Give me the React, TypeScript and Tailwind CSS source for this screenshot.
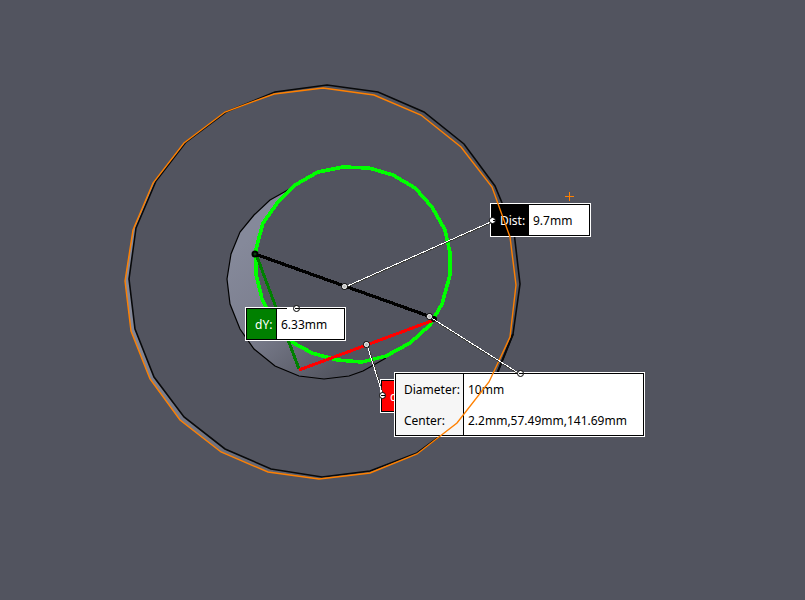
import React from "react";

type LabelRow = { name: string; value: string };

const outerBlack =
  "327,85 378,92 424,112 464,144 495,186 514,232 520,284 513,334 494,381 459,422 417,453 370,471 322,477 271,469 225,449 184,417 154,377 135,329 129,279 136,228 156,181 186,142 226,112 275,92";
const outerOrange =
  "323,88 374,95 421,115 461,147 492,187 510,237 516,285 510,337 489,382 457,423 417,454 370,473 319,479 268,472 221,452 180,420 150,379 131,331 125,281 133,230 153,183 184,143 225,112 274,94";
const greenCircle =
  "343,167 369,168 393,175 415,188 432,207 445,230 450,253 450,275 442,304 430,325 410,343 386,356 362,362 337,360 312,353 290,341 274,322 262,299 256,274 256,249 263,223 278,202 295,185 318,172";
const crescent =
  "291,188 270,200 254,215 240,232 231,254 227,279 230,304 240,329 254,349 275,366 299,376 324,379 349,376 363,371 386,356 362,362 337,360 312,353 290,341 274,322 262,299 256,274 256,249 263,223 278,202";
const crescentEdge =
  "295,186 270,200 254,215 240,232 231,254 227,279 230,304 240,329 254,349 275,366 299,376 324,379 349,376 363,371 386,358";

const lineHandles = [
  [345, 287],
  [430, 317],
  [367, 345],
];
const labelHandles = [
  [297, 309],
  [521, 374],
  [383, 396],
  [493, 221],
];

function Model() {
  return (
    <svg className="absolute left-0 top-0" width="805" height="600" viewBox="0 0 805 600" fill="none" aria-hidden="true">
      <defs>
        <linearGradient id="face" gradientUnits="userSpaceOnUse" x1="235" y1="250" x2="340" y2="370">
          <stop offset="0" stopColor="#85899a" />
          <stop offset="0.45" stopColor="#7c7f8f" />
          <stop offset="1" stopColor="#535560" />
        </linearGradient>
        <linearGradient id="rim" gradientUnits="userSpaceOnUse" x1="125" y1="300" x2="330" y2="330">
          <stop offset="0" stopColor="#85899a" />
          <stop offset="1" stopColor="#5b5d68" />
        </linearGradient>
      </defs>
      <path
        d="M184,143 153,183 133,230 125,281 131,331 150,379 180,420 221,452 268,472 319,479 322,477 271,469 225,449 184,417 154,377 135,329 129,279 136,228 156,181 186,142Z"
        fill="url(#rim)"
      />
      <polygon points={crescent} fill="url(#face)" />
      <polyline points={crescentEdge} stroke="#000" strokeWidth="1.2" />
      <polygon points={outerBlack} stroke="#08090a" strokeWidth="1.6" />
      <path d="M513,334 494,381" stroke="#08090a" strokeWidth="2" />
      <polygon points={greenCircle} stroke="#00ff00" strokeWidth="3.6" shapeRendering="crispEdges" />
      <path d="M256,254 299,369" stroke="#008000" strokeWidth="3" shapeRendering="crispEdges" />
      <path d="M299,370 434,320" stroke="#ff0000" strokeWidth="3" shapeRendering="crispEdges" />
      <path d="M255,254 434,318" stroke="#000" strokeWidth="3.2" shapeRendering="crispEdges" />
      <circle cx="255" cy="254" r="2.500" fill="#06400a" stroke="#000" strokeWidth="2" />
      <circle cx="434" cy="319" r="3" fill="#000" />
    </svg>
  );
}

function Overlay() {
  return (
    <svg className="pointer-events-none absolute left-0 top-0" width="805" height="600" viewBox="0 0 805 600" fill="none" aria-hidden="true">
      <polygon points={outerOrange} stroke="#ff8000" strokeWidth="1.4" />
      <path d="M565,196.500H574M569.500,192V201" stroke="#ff8000" />
      <path d="M345,288 493,222M430,318 520,375M368,346 384,397" stroke="#34342c" />
      <path d="M345,287 493,221M430,317 520,374M367,345 383,396" stroke="#fff" shapeRendering="crispEdges" />
      <path d="M287,308.500H294" stroke="#fff" />
      {lineHandles.map(([x, y]) => (
        <g key={x}>
          <circle cx={x - 0.5} cy={y - 0.5} r="3" fill="#bbb" stroke="#000" />
          <circle cx={x - 0.5} cy={y - 0.5} r="2" stroke="#eee" />
        </g>
      ))}
      {labelHandles.map(([x, y]) => (
        <g key={x}>
          <circle cx={x - 0.5} cy={y - 0.5} r="3" fill="#fff" stroke="#000" />
          <path d={`M${x - 2},${y - 0.5}h4`} stroke="#000" />
        </g>
      ))}
      <path d="M490,220.500H493" stroke="#fff" strokeWidth="2" />
    </svg>
  );
}

function Callout({ rows, place, nameStyle }: { rows: LabelRow[]; place: string; nameStyle: string }) {
  return (
    <dl className={`absolute border border-white bg-white ${place}`}>
      <div className="border border-black">
        {rows.map((row) => (
          <div key={row.name} className="flex h-[30px] leading-8 not-first:h-[31px] not-first:leading-[34px]">
            <dt className={`shrink-0 whitespace-nowrap border-r border-black ${nameStyle}`}>{row.name}</dt>
            <dd className="whitespace-nowrap pl-1 text-black">{row.value}</dd>
          </div>
        ))}
      </div>
    </dl>
  );
}

export default function App() {
  return (
    <main className="relative h-screen overflow-hidden bg-[#52545f] font-['Noto_Sans','Open_Sans',sans-serif] text-[12px]">
      <Model />
      <Callout
        rows={[{ name: "Dist:", value: "9.7mm" }]}
        place="left-[490px] top-[203px] w-[101px]"
        nameStyle="w-[37px] bg-black pl-2 text-white"
      />
      <Callout
        rows={[{ name: "dY:", value: "6.33mm" }]}
        place="left-[245px] top-[307px] w-[101px]"
        nameStyle="w-[30px] bg-[#008000] pl-2 text-white"
      />
      <Callout
        rows={[{ name: "dX:", value: "" }]}
        place="left-[380px] top-[379px] w-[101px]"
        nameStyle="w-[30px] bg-[#ff0000] pl-2 text-white"
      />
      <Callout
        rows={[
          { name: "Diameter:", value: "10mm" },
          { name: "Center:", value: "2.2mm,57.49mm,141.69mm" },
        ]}
        place="left-[394px] top-[372px] w-[251px]"
        nameStyle="w-[68px] bg-[#f6f6f6] pl-2 text-black"
      />
      <Overlay />
    </main>
  );
}
